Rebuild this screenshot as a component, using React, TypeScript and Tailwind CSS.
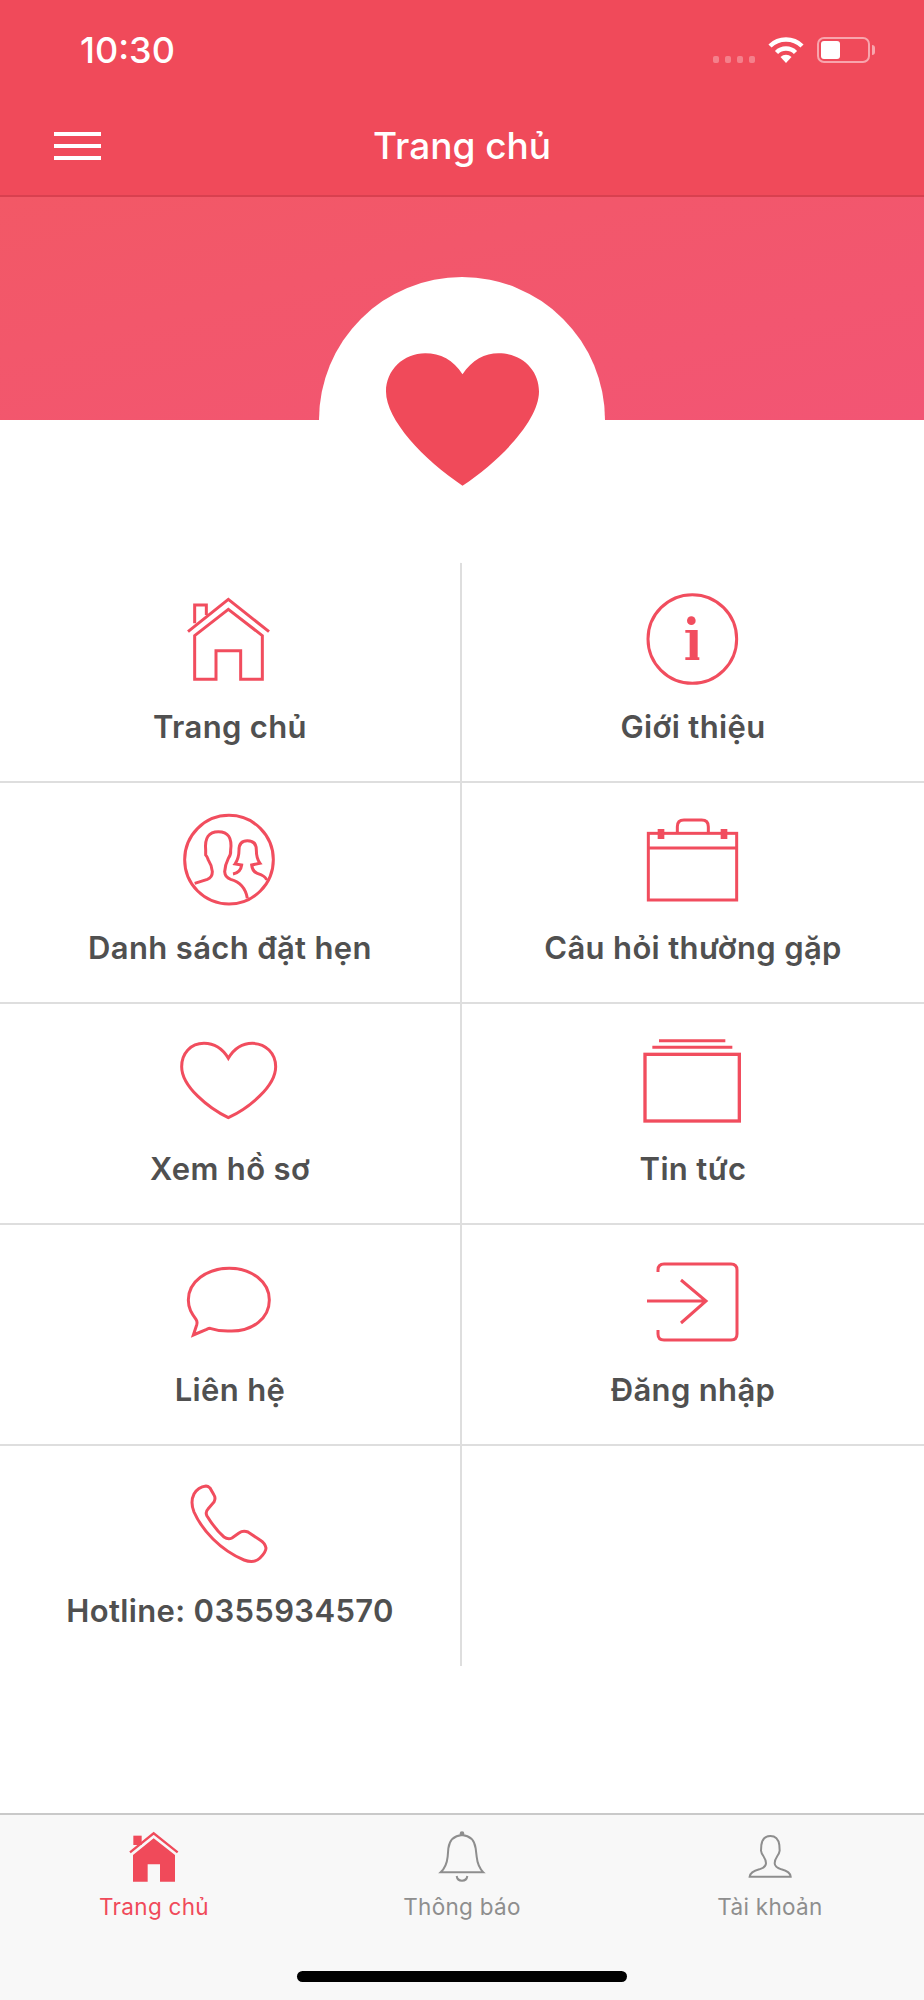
import type { ReactNode } from 'react'

const RED = '#f04a5a'
const GREY = '#8e8e8e'

function Icon({ box, children }: { box: string; children: ReactNode }) {
  return (
    <svg width="160" height="110" viewBox={box} fill="none" stroke="#f14d5e" strokeWidth="9" className="block shrink-0">
      {children}
    </svg>
  )
}

const menu = [
  {
    label: 'Trang chủ',
    icon: (
      <Icon box="3 39 480 330">
        <path d="M117 185 L238 88 L360 185" />
        <path d="M137 197 L238 118 L340 197 V328 H275 V242 H201 V328 H137 Z" />
        <path d="M137 160 V105 H172 V135" />
      </Icon>
    ),
  },
  {
    label: 'Giới thiệu',
    icon: (
      <Icon box="-21 9 480 330">
        <circle cx="217" cy="177" r="133" />
        <circle cx="214" cy="122" r="13" fill="#f14d5e" stroke="none" />
        <path d="M196 150 H233 V232 H238 V240 H196 V232 H209 V158 H196 Z" fill="#f14d5e" stroke="none" />
      </Icon>
    ),
  },
  {
    label: 'Danh sách đặt hẹn',
    icon: (
      <Icon box="-27 12 480 330">
        <circle cx="210" cy="179" r="133" />
        <path d="M107 250 L145 238 Q160 232 160 215 Q158 195 148 180 Q145 170 140 165 L140 150 Q135 95 178 95 Q222 95 215 150 Q216 165 208 175 Q198 195 197 215 Q198 232 215 238 Q258 250 265 295" />
        <path d="M222 222 Q245 218 248 195 L228 192 Q240 175 240 150 Q240 122 265 122 Q292 122 292 150 Q292 175 303 190 L278 195 Q280 215 295 220 Q320 228 323 240" />
      </Icon>
    ),
  },
  {
    label: 'Câu hỏi thường gặp',
    icon: (
      <Icon box="-21 12 480 330">
        <rect x="85" y="100" width="265" height="200" />
        <path d="M85 144 H350" />
        <path d="M172 98 V80 Q172 60 192 60 H245 Q265 60 265 80 V98" />
        <rect x="113" y="87" width="20" height="30" fill="#f14d5e" stroke="none" />
        <rect x="302" y="87" width="20" height="30" fill="#f14d5e" stroke="none" />
      </Icon>
    ),
  },
  {
    label: 'Xem hồ sơ',
    icon: (
      <Icon box="-27 15 480 330">
        <path d="M208 115 C190 85 165 70 135 70 C95 70 68 100 68 140 C68 200 150 265 208 293 C268 265 350 200 350 140 C350 100 320 70 280 70 C250 70 226 85 208 115 Z" />
      </Icon>
    ),
  },
  {
    label: 'Tin tức',
    icon: (
      <Icon box="-21 -15 480 330">
        <rect x="75" y="73" width="283" height="200" strokeWidth="10" />
        <path d="M97 52 H337 M117 32 H316" strokeWidth="9" />
      </Icon>
    ),
  },
  {
    label: 'Liên hệ',
    icon: (
      <Icon box="-30 -12 480 330">
        <path d="M150 235 Q180 245 215 243 C278 243 328 205 328 150 C328 95 275 55 208 55 C140 55 85 95 85 150 C85 175 95 190 108 208 Q113 215 110 225 L100 255 L140 238 Q146 235 150 235 Z" />
      </Icon>
    ),
  },
  {
    label: 'Đăng nhập',
    icon: (
      <Icon box="613 1246 160 110">
        <g strokeWidth="3">
          <path d="M658 1272 V1270 Q658 1264 664 1264 H731 Q737 1264 737 1270 V1334 Q737 1340 731 1340 H664 Q658 1340 658 1334 V1330" />
          <path d="M647 1301 H706 M681 1280 L706 1301 L681 1323" />
        </g>
      </Icon>
    ),
  },
  {
    label: 'Hotline: 0355934570',
    icon: (
      <Icon box="150 1467 160 110">
        <path
          strokeWidth="3"
          d="M206 1486 Q198 1487 194 1494 Q190 1502 194 1512 C202 1530 220 1550 244 1560 Q254 1564 260 1558 Q266 1552 266 1548 Q265 1543 260 1540 L248 1532 Q243 1530 239 1533 L232 1538 Q228 1540 224 1537 C217 1531 212 1524 207 1516 Q205 1512 208 1509 L214 1502 Q216 1498 214 1495 L210 1488 Q208 1486 206 1486 Z"
        />
      </Icon>
    ),
  },
]

function StatusBar() {
  return (
    <div className="flex h-[88px] items-start justify-between pl-[80px] pr-[49px] pt-[36px]">
      <span className="text-[36px] font-medium leading-[28px] text-white">10:30</span>
      <div className="flex items-end gap-[13px] pt-[1px]">
        <div className="flex gap-[5.5px]">
          {[0, 1, 2, 3].map((i) => (
            <div key={i} className="h-[7px] w-[6.5px] rounded-[2px] bg-white/30" />
          ))}
        </div>
        <svg width="36" height="26" viewBox="0 0 36 26" fill="none" stroke="white" strokeWidth="4.5" className="block">
          <path d="M2 9 A23 23 0 0 1 34 9" />
          <path d="M8.5 15.5 A13.5 13.5 0 0 1 27.5 15.5" />
          <path d="M18 26 L12.5 20 A8 8 0 0 1 23.5 20 Z" fill="white" stroke="none" />
        </svg>
        <div className="flex items-center">
          <div className="h-[26px] w-[53px] rounded-[7px] border-2 border-white/50 p-[2px]">
            <div className="h-full w-[19px] rounded-[3px] bg-white" />
          </div>
          <div className="ml-[2px] h-[10px] w-[3px] rounded-r-full bg-white/50" />
        </div>
      </div>
    </div>
  )
}

function MenuGrid() {
  return (
    <div className="mt-[142px] grid grid-cols-2">
      {menu.map((item, i) => (
        <div
          key={item.label}
          className={`flex flex-col items-center pt-[21px] ${i === 8 ? 'h-[220px]' : 'h-[221px] border-b-2 border-[#dedede]'} ${i % 2 === 0 ? 'border-r-2 border-r-[#dedede]' : ''}`}
        >
          {item.icon}
          <span className="mt-[16px] text-[31px] font-semibold leading-[36px] tracking-[0.35px] text-[#505050]">{item.label}</span>
        </div>
      ))}
    </div>
  )
}

function TabBar() {
  return (
    <div className="mt-auto h-[187px] border-t-2 border-[#c9c9c9] bg-[#f8f8f8]">
      <div className="grid grid-cols-3 pt-[10px]">
        <div className="flex flex-col items-center">
          <svg width="120" height="60" viewBox="42 45 360 180" className="block">
            <path d="M150 127 L221 70 L293 127" fill="none" stroke={RED} strokeWidth="7" />
            <rect x="160" y="77" width="25" height="28" fill={RED} />
            <path d="M221 85 L285 135 V215 H240 V163 H203 V215 H159 V135 Z" fill={RED} />
          </svg>
          <span className="mt-[8px] text-[22.5px] leading-[28px] tracking-[0.3px] text-[#f04a5a]">Trang chủ</span>
        </div>
        <div className="flex flex-col items-center">
          <svg width="120" height="60" viewBox="966 45 360 180" fill="none" stroke={GREY} strokeWidth="6" className="block">
            <path d="M1082 187 Q1100 170 1103 140 L1105 115 Q1110 78 1146 75 Q1182 78 1187 115 L1190 140 Q1193 170 1210 187 Z" />
            <circle cx="1146" cy="71" r="7" fill={GREY} stroke="none" />
            <path d="M1130 198 Q1132 212 1146 212 Q1160 212 1162 198" />
          </svg>
          <span className="mt-[8px] text-[22.5px] leading-[28px] tracking-[0.3px] text-[#8e8e8e]">Thông báo</span>
        </div>
        <div className="flex flex-col items-center">
          <svg width="120" height="60" viewBox="627 45 360 180" fill="none" stroke={GREY} strokeWidth="6" className="block">
            <path d="M746 200 Q748 185 775 178 Q795 172 795 160 Q795 150 787 138 Q781 130 780 122 L781 105 Q785 78 808 78 Q831 78 835 105 L836 122 Q835 130 829 138 Q821 150 821 160 Q821 172 841 178 Q868 185 869 200 Z" />
          </svg>
          <span className="mt-[8px] text-[22.5px] leading-[28px] tracking-[0.3px] text-[#8e8e8e]">Tài khoản</span>
        </div>
      </div>
      <div className="mx-auto mt-[50px] h-[11px] w-[330px] rounded-full bg-black" />
    </div>
  )
}

export default function App() {
  return (
    <div className="flex h-[2000px] flex-col bg-white font-['Inter','Noto_Sans',sans-serif]">
      {/* Header */}
      <header className="bg-[#f04a5a]">
        <StatusBar />
        <div className="grid h-[109px] grid-cols-[1fr_auto_1fr] items-center border-b-2 border-[#d8404f] px-[54px] pt-[9px]">
          <div className="flex w-[47px] flex-col gap-[8px]">
            <div className="h-[4px] bg-white" />
            <div className="h-[4px] bg-white" />
            <div className="h-[4px] bg-white" />
          </div>
          <h1 className="text-[37px] font-medium leading-[44px] text-white">Trang chủ</h1>
          <div />
        </div>
      </header>

      {/* Banner */}
      <div className="relative h-[223px] bg-linear-to-br from-[#f25866] to-[#f25574]">
        <div className="absolute left-[319px] top-[80px] flex h-[286px] w-[286px] justify-center rounded-full bg-white pt-[76px]">
          <svg width="153" height="133" viewBox="407 280 460 398" className="block">
            <path
              d="M637 343 C610 300 570 280 525 280 C460 280 407 330 407 395 C407 480 520 600 637 678 C755 600 867 480 867 395 C867 330 815 280 745 280 C705 280 665 300 637 343 Z"
              fill={RED}
            />
          </svg>
        </div>
      </div>

      <MenuGrid />
      <TabBar />
    </div>
  )
}
